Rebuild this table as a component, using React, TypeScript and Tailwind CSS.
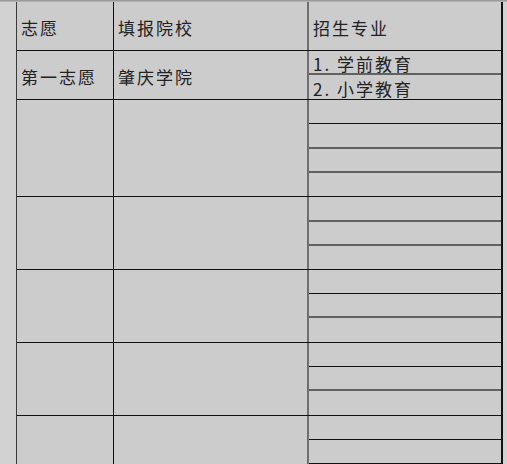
const font = { fontFamily: '"Noto Sans CJK SC", "Noto Sans", sans-serif' };

type Line = "black" | "gray";

// sub rows of the 招生专业 column; the last one of a group always closes with the black group line
interface Group {
  choice?: string;
  school?: string;
  majors: { text?: string; h: number; line: Line }[];
}

const groups: Group[] = [
  {
    choice: "第一志愿",
    school: "肇庆学院",
    majors: [
      { text: "1. 学前教育", h: 24, line: "gray" },
      { text: "2. 小学教育", h: 25, line: "black" },
    ],
  },
  {
    majors: [
      { h: 24, line: "black" },
      { h: 25, line: "gray" },
      { h: 24, line: "gray" },
      { h: 24, line: "black" },
    ],
  },
  {
    majors: [
      { h: 25, line: "gray" },
      { h: 24, line: "gray" },
      { h: 24, line: "black" },
    ],
  },
  {
    majors: [
      { h: 24, line: "black" },
      { h: 24, line: "gray" },
      { h: 25, line: "black" },
    ],
  },
  {
    majors: [
      { h: 24, line: "black" },
      { h: 24, line: "gray" },
      { h: 25, line: "black" },
    ],
  },
  {
    majors: [
      { h: 24, line: "black" },
      { h: 24, line: "black" },
      { h: 24, line: "black" },
    ],
  },
];

function lineClass(line: Line) {
  return line === "black" ? "border-b border-[#111]" : "border-b-2 border-[#616161]";
}

export default function App() {
  return (
    <div
      className="h-[464px] w-[507px] overflow-hidden bg-[#d2d2d2] text-[#222]"
      style={font}
    >
      <div className="h-[2px] w-full bg-gradient-to-b from-[#8f8f8f] to-[#bdbdbd]" />
      <div className="ml-[16px] w-[487px] border-l border-r-2 border-l-[#3a3a3a] border-r-[#111] bg-[#cccccc]">
        {/* header */}
        <div className="flex h-[49px] border-b border-[#111] text-[17px] tracking-[2px]">
          <div className="flex w-[97px] items-center border-r border-[#111] px-1 pt-1">志愿</div>
          <div className="flex w-[195px] items-center border-r-2 border-[#6e6e6e] px-1 pt-1">填报院校</div>
          <div className="flex flex-1 items-center px-1 pt-1">招生专业</div>
        </div>

        {groups.map((g, i) => (
          <div key={i} className="flex border-b border-[#111] text-[17px] tracking-[2px]">
            <div className="flex w-[97px] items-center border-r border-[#111] px-1 pt-1">
              {g.choice}
            </div>
            <div className="flex w-[195px] items-center border-r-2 border-r-[#6e6e6e] px-1 pt-1">
              {g.school}
            </div>
            <div className="flex flex-1 flex-col">
              {g.majors.map((m, j) => {
                const last = j === g.majors.length - 1;
                return (
                  <div
                    key={j}
                    className={[
                      "flex items-center whitespace-nowrap px-1 pt-[3px] leading-[21px]",
                      last ? "" : lineClass(m.line),
                    ].join(" ")}
                    style={{ height: last ? m.h - 1 : m.h }}
                  >
                    {m.text}
                  </div>
                );
              })}
            </div>
          </div>
        ))}
      </div>
    </div>
  );
}
